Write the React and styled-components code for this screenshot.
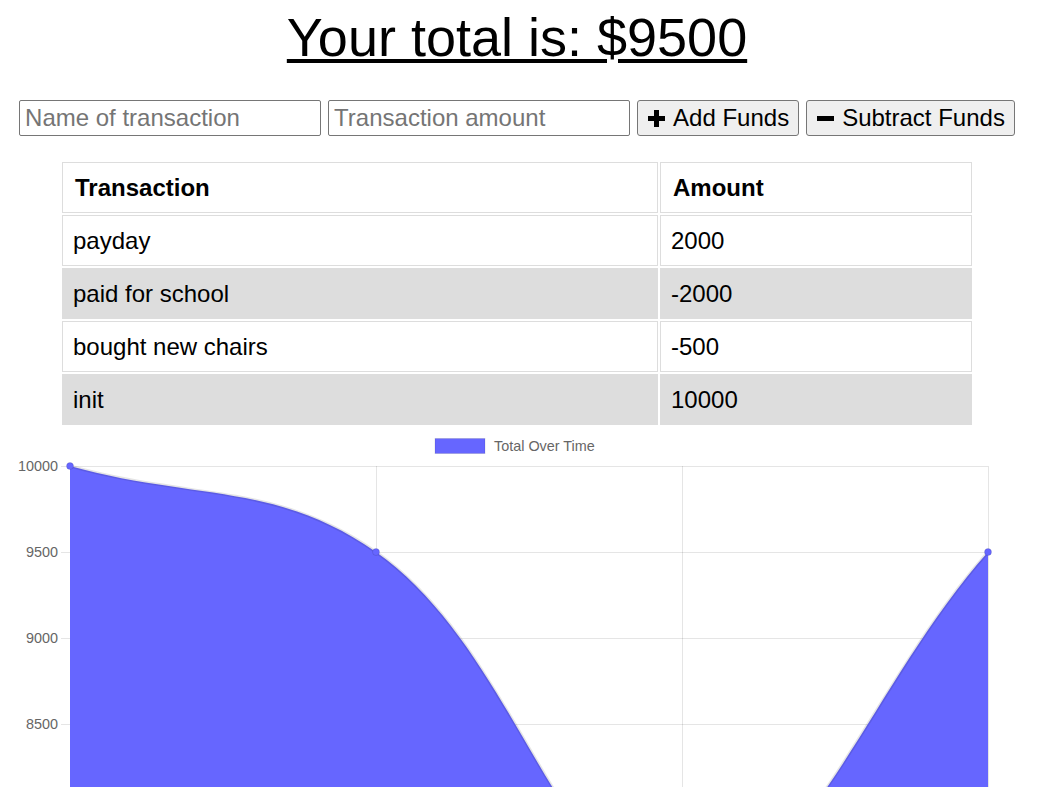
import React from "react";
import styled, { createGlobalStyle } from "styled-components";

const transactions = [
  { name: "payday", value: 2000 },
  { name: "paid for school", value: -2000 },
  { name: "bought new chairs", value: -500 },
  { name: "init", value: 10000 },
];

const GlobalStyle = createGlobalStyle`
  html, body {
    margin: 0;
    padding: 0;
    overflow: hidden;
    background: #fff;
  }
  body {
    font-family: "Liberation Sans", Arial, sans-serif;
    color: #000;
  }
`;

const Page = styled.div`
  width: 1034px;
  height: 787px;
  padding-top: 7px;
  box-sizing: border-box;
  display: flex;
  flex-direction: column;
  align-items: center;
`;

const Title = styled.h1`
  margin: 0;
  font-size: 54px;
  line-height: 60px;
  font-weight: normal;
  text-decoration: underline;
  text-decoration-thickness: 4px;
  text-underline-offset: 3px;
`;

const Form = styled.div`
  display: flex;
  gap: 7px;
  margin-top: 33px;
`;

const TextInput = styled.input`
  width: 302px;
  height: 36px;
  box-sizing: border-box;
  border: 1px solid #767676;
  border-radius: 2px;
  padding: 0 5px;
  font-family: inherit;
  font-size: 24px;
  &::placeholder {
    color: #757575;
  }
`;

const Button = styled.button`
  height: 36px;
  box-sizing: border-box;
  display: flex;
  align-items: center;
  gap: 8px;
  padding: 0 9px 0 10px;
  background: #efefef;
  border: 1px solid #767676;
  border-radius: 3px;
  font-family: inherit;
  font-size: 24px;
  color: #000;
`;

const Table = styled.table`
  margin-top: 24px;
  border-spacing: 2px;
  font-size: 24px;
`;

const HeadCell = styled.th`
  width: ${(p) => p.$w}px;
  height: 51px;
  box-sizing: border-box;
  padding: 0 12px;
  border: 1px solid #ddd;
  text-align: left;
  font-weight: bold;
`;

const Row = styled.tr`
  background: ${(p) => (p.$shaded ? "#ddd" : "#fff")};
`;

const Cell = styled.td`
  height: 51px;
  box-sizing: border-box;
  padding: 0 10px;
  border: 1px solid #ddd;
`;

const ChartWrap = styled.div`
  width: 1034px;
  height: 500px;
  flex-shrink: 0;
`;

const PlusIcon = () => (
  <svg width="17" height="17" viewBox="0 0 17 17">
    <rect x="6" y="0" width="5" height="17" fill="#000" />
    <rect x="0" y="6" width="17" height="5" fill="#000" />
  </svg>
);

const MinusIcon = () => (
  <svg width="17" height="17" viewBox="0 0 17 17">
    <rect x="0" y="6" width="17" height="5" fill="#000" />
  </svg>
);

// y ticks (value -> pixel on page); 8000 and below fall past the fold
const ticks = [
  [10000, 466],
  [9500, 552],
  [9000, 638],
  [8500, 724],
];
const cols = [70, 376, 682, 988];
const points = [
  [70, 466],
  [376, 552],
  [682, 896],
  [988, 552],
];

const curve =
  "M70,466 C192.4,500.4 276,481.7 376,552 C520.8,653.7 559.6,896 682,896 C804.4,896 865.6,689.6 988,552";

const Chart = () => (
  <ChartWrap>
    <svg width="1034" height="500" viewBox="0 427 1034 500">
      <rect x="435" y="438.5" width="50" height="15" fill="#6666ff" stroke="rgba(0,0,0,0.1)" />
      <text x="494" y="451" fontSize="14.4" fill="#666" fontFamily="Liberation Sans, Arial, sans-serif">
        Total Over Time
      </text>
      <line x1="61" x2="988" y1="810.5" y2="810.5" stroke="rgba(0,0,0,0.1)" />
      {ticks.map(([v, y]) => (
        <g key={v}>
          <line x1="61" x2="988" y1={y + 0.5} y2={y + 0.5} stroke="rgba(0,0,0,0.1)" />
          <text
            x="58"
            y={y + 5}
            textAnchor="end"
            fontSize="14.4"
            fill="#666"
            fontFamily="Liberation Sans, Arial, sans-serif"
          >
            {v}
          </text>
        </g>
      ))}
      {cols.map((x) => (
        <line key={x} x1={x + 0.5} x2={x + 0.5} y1="466" y2="927" stroke="rgba(0,0,0,0.1)" />
      ))}
      <path d={`${curve} L988,927 L70,927 Z`} fill="#6666ff" />
      <path d={curve} fill="none" stroke="rgba(0,0,0,0.1)" strokeWidth="3" />
      {points.map(([x, y]) => (
        <circle key={x} cx={x} cy={y} r="3.5" fill="#6666ff" stroke="rgba(0,0,0,0.1)" />
      ))}
    </svg>
  </ChartWrap>
);

export default function App() {
  return (
    <Page>
      <GlobalStyle />
      <Title>Your total is: $9500</Title>
      <Form>
        <TextInput type="text" placeholder="Name of transaction" />
        <TextInput type="number" placeholder="Transaction amount" />
        <Button>
          <PlusIcon />
          Add Funds
        </Button>
        <Button>
          <MinusIcon />
          Subtract Funds
        </Button>
      </Form>
      <Table>
        <thead>
          <tr>
            <HeadCell $w={596}>Transaction</HeadCell>
            <HeadCell $w={312}>Amount</HeadCell>
          </tr>
        </thead>
        <tbody>
          {transactions.map((t, i) => (
            <Row key={t.name} $shaded={i % 2 === 1}>
              <Cell>{t.name}</Cell>
              <Cell>{t.value}</Cell>
            </Row>
          ))}
        </tbody>
      </Table>
      <Chart />
    </Page>
  );
}
